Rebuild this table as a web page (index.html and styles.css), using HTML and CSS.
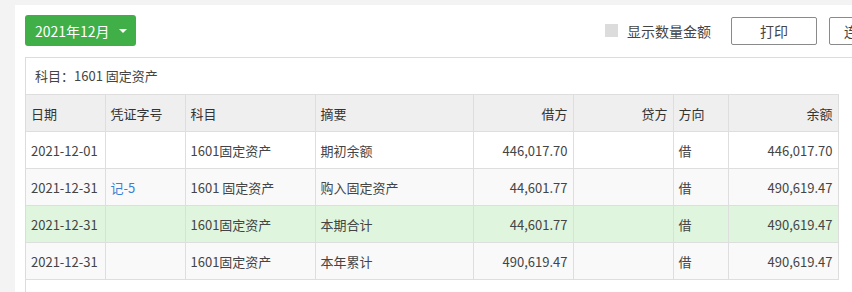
FILE: index.html
```html
<!DOCTYPE html>
<html lang="zh-CN">
<head>
<meta charset="utf-8">
<title>明细账</title>
<link rel="stylesheet" href="styles.css">
</head>
<body>
<div class="panel">
  <div class="toolbar">
    <button class="period-btn">2021年12月<span class="caret"></span></button>
    <div class="tools">
      <label class="check"><span class="box"></span>显示数量金额</label>
      <button class="btn">打印</button>
      <button class="btn">连续打印</button>
    </div>
  </div>
  <div class="ledger">
    <div class="subject">科目：1601 固定资产</div>
    <table class="grid">
      <colgroup>
        <col class="c-date"><col class="c-voucher"><col class="c-subj"><col class="c-sum">
        <col class="c-debit"><col class="c-credit"><col class="c-dir"><col class="c-bal">
      </colgroup>
      <thead>
        <tr>
          <th>日期</th><th>凭证字号</th><th>科目</th><th>摘要</th>
          <th class="num">借方</th><th class="num">贷方</th><th>方向</th><th class="num">余额</th>
        </tr>
      </thead>
      <tbody>
        <tr>
          <td>2021-12-01</td><td></td><td>1601固定资产</td><td>期初余额</td>
          <td class="num">446,017.70</td><td class="num"></td><td>借</td><td class="num">446,017.70</td>
        </tr>
        <tr class="even">
          <td>2021-12-31</td><td><a class="link" href="#">记-5</a></td><td>1601 固定资产</td><td>购入固定资产</td>
          <td class="num">44,601.77</td><td class="num"></td><td>借</td><td class="num">490,619.47</td>
        </tr>
        <tr class="total">
          <td>2021-12-31</td><td></td><td>1601固定资产</td><td>本期合计</td>
          <td class="num">44,601.77</td><td class="num"></td><td>借</td><td class="num">490,619.47</td>
        </tr>
        <tr class="even">
          <td>2021-12-31</td><td></td><td>1601固定资产</td><td>本年累计</td>
          <td class="num">490,619.47</td><td class="num"></td><td>借</td><td class="num">490,619.47</td>
        </tr>
      </tbody>
    </table>
  </div>
</div>
</body>
</html>
```

FILE: styles.css
```css
html, body {
  margin: 0;
  padding: 0;
  height: 100%;
  overflow: hidden;
}
body {
  background: #f3f3f3;
  font-family: "Noto Sans CJK SC", "Noto Sans", sans-serif;
  color: #444;
  font-size: 13px;
}
.panel {
  margin: 5px 0 0 15px;
  padding: 10px 0 0 10px;
  background: #fff;
  height: calc(100% - 15px);
  overflow: hidden;
}
.toolbar {
  display: flex;
  align-items: center;
  width: 890px;
  height: 31px;
}
.period-btn {
  display: flex;
  align-items: center;
  width: 111px;
  height: 31px;
  padding: 0 0 0 10px;
  border: none;
  border-radius: 3px;
  background: #40af48;
  color: #fff;
  font-family: inherit;
  font-size: 14px;
  cursor: pointer;
}
.caret {
  margin-left: 9px;
  width: 0;
  height: 0;
  border-left: 4px solid transparent;
  border-right: 4px solid transparent;
  border-top: 4px solid #fff;
}
.tools {
  margin-left: auto;
  display: flex;
  align-items: center;
  gap: 12px;
}
.check {
  display: flex;
  align-items: center;
  gap: 9px;
  margin-right: 8px;
  font-size: 14px;
  color: #444;
}
.check .box {
  width: 13px;
  height: 13px;
  background: #dcdcdc;
}
.btn {
  width: 86px;
  height: 28px;
  border: 1px solid #8a8a8a;
  border-radius: 2px;
  background: #fff;
  color: #444;
  font-family: inherit;
  font-size: 14px;
}
.ledger {
  margin-top: 11px;
  border-top: 1px solid #dcdcdc;
  border-left: 1px solid #dcdcdc;
  height: 300px;
}
.subject {
  height: 36px;
  line-height: 36px;
  padding-left: 9px;
  font-size: 13px;
  color: #444;
}
.grid {
  border-collapse: collapse;
  table-layout: fixed;
  width: 812px;
}
.c-date { width: 79px; }
.c-voucher { width: 80px; }
.c-subj { width: 130px; }
.c-sum { width: 158px; }
.c-debit { width: 100px; }
.c-credit { width: 100px; }
.c-dir { width: 55px; }
.c-bal { width: 110px; }
.grid th, .grid td {
  height: 36px;
  padding: 0 5px;
  border: 1px solid #dedede;
  text-align: left;
  white-space: nowrap;
  font-weight: normal;
}
.grid tr > :first-child { border-left: none; }
.grid th {
  background: #efefef;
  color: #333;
}
.grid td {
  color: #444;
}
.grid .num { text-align: right; }
.grid tr.even td { background: #f9f9f9; }
.grid tr.total td { background: #dff5de; }
.link {
  color: #3b7fd4;
  text-decoration: none;
}
```
